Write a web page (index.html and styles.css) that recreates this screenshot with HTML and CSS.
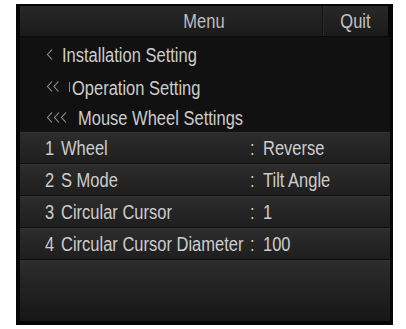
FILE: index.html
```html
<html>
	<head>
		<title>Menu</title>
		<meta charset="utf-8">
		<link rel="stylesheet" href="styles.css">
	</head>
	<body>
		<div id="panel">
			<div id="header">
				<div class="title"><span class="tall">Menu</span></div>
				<div class="quit"><span class="tall">Quit</span></div>
			</div>

			<div id="crumbs">
				<div class="crumb first">
					<svg class="chev" width="8" height="13" viewBox="0 0 8 13"><polyline points="6,1.5 1.5,6.5 6,11.5"/></svg>
					<span class="tall gap1">Installation Setting</span>
				</div>
				<div class="crumb second">
					<svg class="chev" width="14" height="13" viewBox="0 0 14 13"><polyline points="6,1.5 1.5,6.5 6,11.5"/><polyline points="12.5,1.5 8,6.5 12.5,11.5"/></svg>
					<span class="tick"></span>
					<span class="tall">Operation Setting</span>
				</div>
				<div class="crumb third">
					<svg class="chev" width="22" height="13" viewBox="0 0 22 13"><polyline points="6,1.5 1.5,6.5 6,11.5"/><polyline points="13,1.5 8.5,6.5 13,11.5"/><polyline points="20,1.5 15.5,6.5 20,11.5"/></svg>
					<span class="tall gap3">Mouse Wheel Settings</span>
				</div>
			</div>

			<ul id="settings">
				<li><span class="tall num">1</span><span class="tall label">Wheel</span><span class="tall colon">:</span><span class="tall">Reverse</span></li>
				<li><span class="tall num">2</span><span class="tall label">S Mode</span><span class="tall colon">:</span><span class="tall">Tilt Angle</span></li>
				<li><span class="tall num">3</span><span class="tall label">Circular Cursor</span><span class="tall colon">:</span><span class="tall">1</span></li>
				<li><span class="tall num">4</span><span class="tall label">Circular Cursor Diameter</span><span class="tall colon">:</span><span class="tall">100</span></li>
			</ul>

			<div id="footer"></div>
		</div>
	</body>
</html>
```

FILE: styles.css
```css
body {
	margin: 0;
	background-color: white;
	color: rgb(205, 205, 205);
	font-family: "Liberation Sans", Arial, sans-serif;
	font-size: 16.5px;
}

/* the source screen is stretched a little in height */
.tall {
	display: inline-block;
	transform: scaleY(1.17);
}

#panel {
	display: flex;
	flex-direction: column;
	box-sizing: border-box;
	margin: 4px 13px 0 16px;
	height: 321px;
	padding: 2px 3px 4px 4px;
	background-color: rgb(6, 6, 6);
}

#header {
	position: relative;
	height: 30px;
	background: linear-gradient(rgb(40, 40, 40), rgb(26, 26, 26));
	border-bottom: 1px solid rgb(10, 10, 10);
	margin-right: 2px;
}

.title {
	line-height: 30px;
	text-align: center;
	color: rgb(190, 190, 190);
}

.quit {
	position: absolute;
	top: 0;
	right: 0;
	width: 65px;
	height: 30px;
	line-height: 30px;
	text-align: center;
	border-left: 1px solid rgb(18, 18, 18);
	box-shadow: inset 1px 0 0 rgb(44, 44, 44);
	color: rgb(195, 195, 195);
}

#crumbs {
	height: 95px;
	background-color: rgb(17, 17, 17);
}

.crumb {
	display: flex;
	align-items: center;
	padding-left: 26px;
	box-sizing: border-box;
}

.crumb.first {
	height: 33px;
	padding-top: 4px;
}

.crumb.second {
	height: 33px;
	padding-top: 3px;
}

.crumb.third {
	height: 29px;
	padding-top: 2px;
}

.chev {
	fill: none;
	stroke: rgb(150, 150, 150);
	stroke-width: 1.1;
	margin-top: -3px;
}

.gap1 {
	margin-left: 8px;
}

.tick {
	width: 1px;
	height: 10px;
	margin: -3px 2px 0 9px;
	background-color: rgb(140, 140, 140);
}

.gap3 {
	margin-left: 10px;
}

#settings {
	list-style-type: none;
	margin: 0;
	padding: 0;
}

#settings li {
	display: flex;
	align-items: center;
	height: 30px;
	padding-left: 25px;
	background: linear-gradient(rgb(44, 44, 44), rgb(30, 30, 30));
	border-top: 1px solid rgb(52, 52, 52);
	border-bottom: 1px solid rgb(12, 12, 12);
}

.num {
	width: 16px;
}

.label {
	width: 189px;
}

.colon {
	width: 13px;
}

#footer {
	flex: 1;
	background: linear-gradient(rgb(44, 44, 44), rgb(22, 22, 22));
	border-top: 1px solid rgb(50, 50, 50);
}
```
